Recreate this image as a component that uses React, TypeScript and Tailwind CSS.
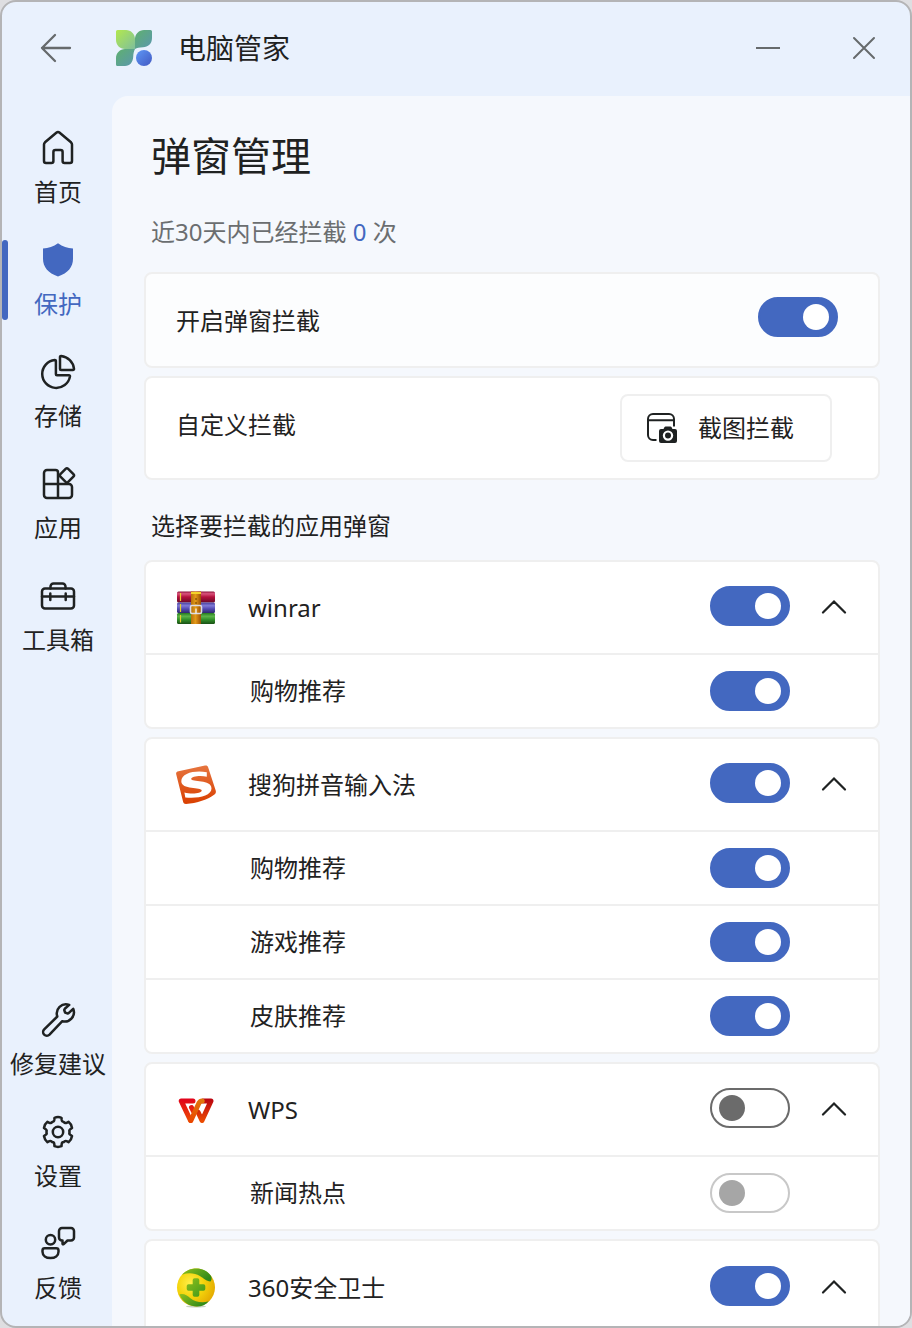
import { useState } from "react";
import type { ReactNode } from "react";
import clsx from "clsx";

/* ---------- line icons ---------- */

function LineIcon({ children }: { children: ReactNode }) {
  return (
    <svg
      viewBox="0 0 40 40"
      className="size-10"
      fill="none"
      stroke="currentColor"
      strokeWidth="2.5"
      strokeLinecap="round"
      strokeLinejoin="round"
      aria-hidden="true"
    >
      {children}
    </svg>
  );
}

const HomeIcon = () => (
  <LineIcon>
    <path d="M6 16.600c0-.9.4-1.700 1-2.300L18.300 4.700a2.600 2.600 0 0 1 3.400 0L33 14.300c.6.600 1 1.400 1 2.300V33a2 2 0 0 1-2 2h-5.400a2 2 0 0 1-2-2v-9a2 2 0 0 0-2-2h-5.200a2 2 0 0 0-2 2v9a2 2 0 0 1-2 2H8a2 2 0 0 1-2-2z" />
  </LineIcon>
);

const ShieldIcon = () => (
  <LineIcon>
    <path
      d="M20 3.200c4.600 3.300 9.500 4.900 15 5.300v10.300c0 8.200-5 14.200-15 17.800C10 33 5 27 5 18.800V8.500c5.500-.4 10.400-2 15-5.300z"
      fill="currentColor"
      stroke="none"
    />
  </LineIcon>
);

const StorageIcon = () => (
  <LineIcon>
    <path d="M17.900 9a1 1 0 0 0-1.100-1A14 14 0 1 0 32 24.400a1 1 0 0 0-1-1.100H18.900a1 1 0 0 1-1-1z" />
    <path d="M22 5a1 1 0 0 1 1.100-1A14.500 14.500 0 0 1 36 16.900a1 1 0 0 1-1 1.100H23a1 1 0 0 1-1-1z" />
  </LineIcon>
);

const AppsIcon = () => (
  <LineIcon>
    <path d="M9 6h8.500a2.500 2.500 0 0 1 2.500 2.500V20h11a3 3 0 0 1 3 3v8a3 3 0 0 1-3 3H9a3 3 0 0 1-3-3V9a3 3 0 0 1 3-3zM6 20h14M20 20v14" />
    <rect x="23.400" y="5.900" width="11" height="11" rx="1.800" transform="rotate(45 28.900 11.400)" />
  </LineIcon>
);

const ToolboxIcon = () => (
  <LineIcon>
    <rect x="4" y="12.600" width="32" height="20" rx="3" />
    <path d="M12.500 12.600v-2.100a3 3 0 0 1 3-3h9a3 3 0 0 1 3 3v2.100M4 20.500h32M12.300 17.500v6.500M27.700 17.500v6.500" />
  </LineIcon>
);

const WrenchIcon = () => (
  <LineIcon>
    <path d="M31.200 4.900A9.200 9.200 0 0 0 19.300 16.500L6.200 29.300a3.700 3.700 0 0 0 5.300 5.300L24.300 21.200A9.200 9.200 0 0 0 35.200 8.800l-4.300 4.100c-.5.500-1.100.600-1.700.400l-2.100-.7-.7-2.100c-.2-.6-.1-1.200.4-1.700z" />
  </LineIcon>
);

function gearOutline() {
  const at = (deg: number, r: number) => {
    const a = (deg * Math.PI) / 180;
    return `${(20 + r * Math.cos(a)).toFixed(2)} ${(20 + r * Math.sin(a)).toFixed(2)}`;
  };
  let d = "";
  for (let i = 0; i < 6; i++) {
    const c = -90 + i * 60;
    d += `${i ? "L" : "M"}${at(c - 14, 14.6)}Q${at(c, 15.6)} ${at(c + 14, 14.6)}`;
    d += `L${at(c + 17, 12.6)}Q${at(c + 21, 10.9)} ${at(c + 30, 11.6)}Q${at(c + 39, 10.9)} ${at(c + 43, 12.6)}`;
  }
  return d + "Z";
}

const GearIcon = () => (
  <LineIcon>
    <path d={gearOutline()} />
    <circle cx="20" cy="20" r="5.200" />
  </LineIcon>
);

const FeedbackIcon = () => (
  <LineIcon>
    <circle cx="12.500" cy="15.800" r="4.700" />
    <path d="M6.700 24.300h11.600a2.200 2.200 0 0 1 2.200 2.200v1.300c0 4-3.500 6.200-8 6.200s-8-2.200-8-6.200v-1.300a2.200 2.200 0 0 1 2.200-2.200z" />
    <path d="M24 4h9a3 3 0 0 1 3 3v6.500a3 3 0 0 1-3 3h-3.500l-3.800 3.600c-.6.500-1.200.2-1.200-.6v-3H24a3 3 0 0 1-3-3V7a3 3 0 0 1 3-3z" />
  </LineIcon>
);

const BackIcon = () => (
  <svg viewBox="0 0 32 32" className="size-8" fill="none" stroke="currentColor" strokeWidth="2.300" strokeLinecap="round" strokeLinejoin="round" aria-hidden="true">
    <path d="M30 16H2M15 3 2 16l13 13" />
  </svg>
);

const ScreenshotIcon = () => (
  <svg viewBox="0 0 32 32" className="size-8" aria-hidden="true">
    <path d="M10.500 28H7a5 5 0 0 1-5-5V7a5 5 0 0 1 5-5h16a5 5 0 0 1 5 5v7.500M2 8.200h26" fill="none" stroke="currentColor" strokeWidth="2" />
    <path
      fill="currentColor"
      fillRule="evenodd"
      d="m17.500 17 .9-1.700c.2-.5.700-.8 1.200-.8h4.800c.5 0 1 .3 1.200.8l.9 1.700h2.500a2 2 0 0 1 2 2v10a2 2 0 0 1-2 2H15a2 2 0 0 1-2-2V19a2 2 0 0 1 2-2zM22 18.400a5.200 5.200 0 1 0 0 10.400 5.200 5.200 0 0 0 0-10.400zm0 2.200a3 3 0 1 1 0 6 3 3 0 0 1 0-6z"
    />
  </svg>
);

/* ---------- brand marks ---------- */

const ManagerLogo = () => (
  <svg viewBox="0 0 36 36" className="size-9" aria-hidden="true">
    <defs>
      <linearGradient id="leafA" x1="0" y1="0" x2="1" y2="1">
        <stop offset="0" stopColor="#b2e84e" />
        <stop offset="1" stopColor="#7fbf9c" />
      </linearGradient>
      <linearGradient id="leafB" x1="0" y1="0" x2="1" y2="1">
        <stop offset="0" stopColor="#5fb06f" />
        <stop offset="1" stopColor="#5a97ae" />
      </linearGradient>
      <linearGradient id="dot" x1="0" y1="0" x2="1" y2="1">
        <stop offset="0" stopColor="#5e97f5" />
        <stop offset="1" stopColor="#4259c3" />
      </linearGradient>
    </defs>
    <path d="M28 0h6.500A1.500 1.500 0 0 1 36 1.500V8c0 6-4 9-9 9.300-4 .2-6 .7-8 1.700V9c0-5 4-9 9-9z" fill="url(#leafB)" />
    <path d="M9 19h10c-1 2-1.600 4-1.800 8-.3 5-3.200 9-8.200 9H1.500A1.500 1.500 0 0 1 0 34.500V28c0-5 4-9 9-9z" fill="url(#leafB)" />
    <path d="M1.500 0H10c5 0 9 4 9 9v10H9c-5 0-9-4-9-9V1.500A1.500 1.500 0 0 1 1.500 0z" fill="url(#leafA)" />
    <circle cx="28" cy="28" r="8" fill="url(#dot)" />
  </svg>
);

const WinrarLogo = () => (
  <svg viewBox="0 0 40 40" className="size-10" aria-hidden="true">
    <defs>
      <linearGradient id="bookR" x1="0" y1="0" x2="0" y2="1">
        <stop offset="0" stopColor="#8d1238" />
        <stop offset=".2" stopColor="#d8537c" />
        <stop offset=".5" stopColor="#b3113e" />
        <stop offset="1" stopColor="#6b0a28" />
      </linearGradient>
      <linearGradient id="bookP" x1="0" y1="0" x2="0" y2="1">
        <stop offset="0" stopColor="#463f9c" />
        <stop offset=".3" stopColor="#7f7ad6" />
        <stop offset=".6" stopColor="#544bb4" />
        <stop offset="1" stopColor="#2e286c" />
      </linearGradient>
      <linearGradient id="bookG" x1="0" y1="0" x2="0" y2="1">
        <stop offset="0" stopColor="#257a1e" />
        <stop offset=".3" stopColor="#5cb44a" />
        <stop offset=".6" stopColor="#31902a" />
        <stop offset="1" stopColor="#1a5015" />
      </linearGradient>
      <linearGradient id="strap" x1="0" y1="0" x2="1" y2="0">
        <stop offset="0" stopColor="#b5700c" />
        <stop offset=".45" stopColor="#e39a18" />
        <stop offset="1" stopColor="#9a4e06" />
      </linearGradient>
    </defs>
    <rect x="1" y="3.500" width="38" height="11" rx="1.500" fill="url(#bookR)" />
    <rect x="1" y="14.500" width="38" height="10.500" rx="1.500" fill="url(#bookP)" />
    <rect x="1" y="25" width="38" height="11" rx="1.500" fill="url(#bookG)" />
    <path d="M4.500 5v8M4.500 16v8M4.500 27v7.500" stroke="#e8cf2c" strokeWidth="1.200" />
    <rect x="15" y="3.500" width="10" height="32.500" fill="url(#strap)" />
    <path d="M15 4h10v2H15z" fill="#f4d42a" />
    <circle cx="20" cy="11" r=".8" fill="#5a2c02" />
    <circle cx="20" cy="15" r=".8" fill="#5a2c02" />
    <rect x="14.500" y="17.500" width="11" height="8" rx="1.500" fill="none" stroke="#dcdce4" strokeWidth="1.600" />
    <path d="M20 20.500v5" stroke="#f1f1f1" strokeWidth="1.400" />
  </svg>
);

const SogouLogo = () => (
  <svg viewBox="0 0 40 40" className="size-10" aria-hidden="true">
    <defs>
      <linearGradient id="sogou" x1="0" y1="0" x2="0" y2="1">
        <stop offset="0" stopColor="#e6753f" />
        <stop offset="1" stopColor="#d93f00" />
      </linearGradient>
    </defs>
    <path d="M2.500 6.200 29 .6c1.600-.3 2.700.3 3.200 1.800l7.500 23.200c.5 1.600.1 2.900-1.300 4C32.500 34.300 20.500 38.600 10 39c-1.600 0-2.500-.7-2.900-2.200L.2 9.300c-.4-1.700.5-2.800 2.300-3.100z" fill="url(#sogou)" />
    <path
      d="M30.800 7.200v4.600c-6-1.600-15.600-.6-15.600 2.300 0 3.400 20.300 0 20.300 9.400 0 7.600-14.500 10.300-26.200 8.900l-.9-5c6.400 1.700 17.300 1.300 17.300-2 0-3.600-20.400-.3-20.400-9.200 0-8.300 13.800-11.100 25.500-9z"
      fill="#fff"
    />
  </svg>
);

const WpsLogo = () => (
  <svg viewBox="0 0 40 40" className="size-10" fill="none" strokeWidth="5" strokeLinejoin="round" strokeLinecap="round" aria-hidden="true">
    <defs>
      <linearGradient id="wpsL" gradientUnits="userSpaceOnUse" x1="0" y1="8" x2="0" y2="33">
        <stop offset="0" stopColor="#e0001c" />
        <stop offset="1" stopColor="#ee5000" />
      </linearGradient>
      <linearGradient id="wpsM" gradientUnits="userSpaceOnUse" x1="26" y1="8" x2="15" y2="32">
        <stop offset="0" stopColor="#e07a0c" />
        <stop offset="1" stopColor="#ea4600" />
      </linearGradient>
      <linearGradient id="wpsR" gradientUnits="userSpaceOnUse" x1="0" y1="8" x2="0" y2="33">
        <stop offset="0" stopColor="#b80010" />
        <stop offset="1" stopColor="#ee5000" />
      </linearGradient>
    </defs>
    <path d="M27 10.900h8L26 30.500l-4-8.500" stroke="url(#wpsR)" />
    <path d="M17 10.900H5.200l9.300 19.600M15.500 17.500l2 4" stroke="url(#wpsL)" />
    <path d="M14.900 30.500 23 13c.8-1.500 1.700-2.100 3.200-2.100" stroke="url(#wpsM)" />
  </svg>
);

const Safe360Logo = () => (
  <svg viewBox="0 0 40 40" className="size-10" aria-hidden="true">
    <defs>
      <radialGradient id="ball" cx=".35" cy=".4" r=".7">
        <stop offset="0" stopColor="#fff04a" />
        <stop offset=".5" stopColor="#f4d40c" />
        <stop offset="1" stopColor="#e3a800" />
      </radialGradient>
      <linearGradient id="leaf360" x1="0" y1="0" x2="1" y2=".6">
        <stop offset="0" stopColor="#8fc01d" />
        <stop offset="1" stopColor="#2f8a1a" />
      </linearGradient>
      <linearGradient id="cross360" gradientUnits="userSpaceOnUse" x1="11" y1="10" x2="29" y2="29">
        <stop offset="0" stopColor="#8cbf1c" />
        <stop offset="1" stopColor="#3f971a" />
      </linearGradient>
    </defs>
    <ellipse cx="20" cy="38.500" rx="10" ry="1" fill="#c9d2c2" />
    <circle cx="20" cy="19.500" r="19" fill="url(#ball)" />
    <path d="M6 6.800C14-2.500 29-1 34.700 7.600c1.400 2.200 1.200 4.200-.2 5.800-4.500-.4-6.500-3.100-10.600-5.500C18.700 5 12 4.500 6 6.800z" fill="url(#leaf360)" />
    <path d="M3.400 26.500c4.200-1.400 7.500.8 11 3.700 4.600 3.600 11.600 5.100 18.300 3.100C26.700 41.300 9.700 41 3.400 26.500z" fill="url(#leaf360)" />
    <path d="M18.500 12h3v6h6v3h-6v6h-3v-6h-6v-3h6z" fill="url(#cross360)" stroke="url(#cross360)" strokeWidth="3.600" strokeLinejoin="round" />
  </svg>
);

/* ---------- controls ---------- */

type SwitchProps = {
  label: string;
  checked: boolean;
  disabled?: boolean;
  onChange: (value: boolean) => void;
};

function Switch({ label, checked, disabled, onChange }: SwitchProps) {
  return (
    <input
      type="checkbox"
      role="switch"
      aria-label={label}
      checked={checked}
      disabled={disabled}
      onChange={(e) => onChange(e.target.checked)}
      className="flex h-10 w-20 shrink-0 cursor-pointer appearance-none items-center rounded-full border-2 border-[#6b6b6b] bg-white px-[7px] before:size-[26px] before:rounded-full before:bg-[#6b6b6b] before:content-[''] checked:justify-end checked:border-[#4368c0] checked:bg-[#4368c0] checked:before:bg-white disabled:border-[#c8c8c8] disabled:before:bg-[#a6a6a6]"
    />
  );
}

type NavItem = { id: string; label: string; icon: ReactNode };

const mainNav: NavItem[] = [
  { id: "home", label: "首页", icon: <HomeIcon /> },
  { id: "protect", label: "保护", icon: <ShieldIcon /> },
  { id: "storage", label: "存储", icon: <StorageIcon /> },
  { id: "apps", label: "应用", icon: <AppsIcon /> },
  { id: "tools", label: "工具箱", icon: <ToolboxIcon /> },
];

const footNav: NavItem[] = [
  { id: "repair", label: "修复建议", icon: <WrenchIcon /> },
  { id: "settings", label: "设置", icon: <GearIcon /> },
  { id: "feedback", label: "反馈", icon: <FeedbackIcon /> },
];

function NavButton({ item, active, onSelect }: { item: NavItem; active: boolean; onSelect: () => void }) {
  return (
    <button
      type="button"
      onClick={onSelect}
      aria-current={active ? "page" : undefined}
      className={clsx(
        "relative flex h-28 w-full shrink-0 flex-col items-center gap-2 pt-4 pl-0.5 text-2xl leading-8 whitespace-nowrap",
        active
          ? "text-[#4368c0] before:absolute before:top-4 before:left-0 before:h-20 before:w-1.5 before:rounded-full before:bg-[#4368c0]"
          : "text-[#1f2222]",
      )}
    >
      {item.icon}
      <span>{item.label}</span>
    </button>
  );
}

type Rule = { name: string; on: boolean };
type AppGroup = { name: string; logo: ReactNode; on: boolean; open: boolean; rules: Rule[] };

const initialGroups: AppGroup[] = [
  { name: "winrar", logo: <WinrarLogo />, on: true, open: true, rules: [{ name: "购物推荐", on: true }] },
  {
    name: "搜狗拼音输入法",
    logo: <SogouLogo />,
    on: true,
    open: true,
    rules: [
      { name: "购物推荐", on: true },
      { name: "游戏推荐", on: true },
      { name: "皮肤推荐", on: true },
    ],
  },
  { name: "WPS", logo: <WpsLogo />, on: false, open: true, rules: [{ name: "新闻热点", on: false }] },
  { name: "360安全卫士", logo: <Safe360Logo />, on: true, open: true, rules: [] },
];

function GroupCard({ group, onChange }: { group: AppGroup; onChange: (g: AppGroup) => void }) {
  return (
    <li className="divide-y-2 divide-[#efefef] rounded-lg border-2 border-[#efefef] bg-white">
      <div className="flex h-[93px] items-center pr-7 pl-[30px]">
        {group.logo}
        <span className="ml-8 flex-1">{group.name}</span>
        <div className="flex items-center gap-7 pb-1">
          <Switch label={group.name} checked={group.on} onChange={(on) => onChange({ ...group, on })} />
          <button
            type="button"
            aria-label={group.name}
            aria-expanded={group.open}
            onClick={() => onChange({ ...group, open: !group.open })}
            className="flex size-8 items-center justify-center"
          >
            <svg
              viewBox="0 0 28 28"
              className={clsx("size-7", !group.open && "rotate-180")}
              fill="none"
              stroke="#1f2222"
              strokeWidth="2.2"
              strokeLinecap="round"
              aria-hidden="true"
            >
              <path d="M3 20.500 14 9.500l11 11" />
            </svg>
          </button>
        </div>
      </div>
      {group.open &&
        group.rules.map((rule, i) => (
          <div key={rule.name} className="flex h-[74px] items-center pr-[88px] pl-[104px] last:h-[72px]">
            <span className="flex-1">{rule.name}</span>
            <Switch
              label={rule.name}
              checked={rule.on}
              disabled={!group.on}
              onChange={(on) =>
                onChange({ ...group, rules: group.rules.map((r, j) => (j === i ? { ...r, on } : r)) })
              }
            />
          </div>
        ))}
    </li>
  );
}

export default function App() {
  const [page, setPage] = useState("protect");
  const [blocking, setBlocking] = useState(true);
  const [groups, setGroups] = useState(initialGroups);

  const renderNav = (item: NavItem) => (
    <NavButton key={item.id} item={item} active={page === item.id} onSelect={() => setPage(item.id)} />
  );

  return (
    <div className="h-screen bg-[#dedee1] font-['Noto_Sans','Noto_Sans_CJK_SC',sans-serif] text-[#1f2222]">
      <div className="flex h-full flex-col overflow-hidden rounded-2xl border-2 border-[#b4b4b6] bg-[#e9f1fd]">
        <header className="flex h-[94px] shrink-0 items-center pr-[30px] pb-0.5 pl-[38px] text-[#666a6c]">
          <button type="button" aria-label="返回">
            <BackIcon />
          </button>
          <span className="ml-11">
            <ManagerLogo />
          </span>
          <span className="ml-[26px] flex-1 text-[28px] leading-10 text-[#1f2222]">电脑管家</span>
          <button type="button" aria-label="最小化" className="flex size-8 items-center justify-center">
            <svg viewBox="0 0 24 24" className="size-6" stroke="currentColor" strokeWidth="2" aria-hidden="true">
              <path d="M0 12h24" />
            </svg>
          </button>
          <button type="button" aria-label="关闭" className="ml-16 flex size-8 items-center justify-center">
            <svg viewBox="0 0 24 24" className="size-6" stroke="currentColor" strokeWidth="2" strokeLinecap="round" aria-hidden="true">
              <path d="m2 2 20 20M22 2 2 22" />
            </svg>
          </button>
        </header>

        <div className="flex min-h-0 flex-1">
          <nav className="flex w-[110px] shrink-0 flex-col pt-4 pb-1.5">
            {mainNav.map(renderNav)}
            <div className="flex-1" />
            {footNav.map(renderNav)}
          </nav>

          <main className="min-w-0 flex-1 overflow-y-auto rounded-tl-2xl bg-[#f5f8fd] pr-[30px] pl-8 text-2xl leading-9 [scrollbar-width:none]">
            <h1 className="mt-[30px] pl-[7px] text-[40px] leading-[60px]">弹窗管理</h1>
            <p className="mt-7 pl-[7px] text-[#6b6e70]">
              近30天内已经拦截 <span className="text-[#4368c0]">0</span> 次
            </p>

            <section className="mt-[22px] flex items-start justify-between rounded-lg border-2 border-[#efefef] bg-[#fcfdfe] pt-[23px] pr-10 pb-[21px] pl-[30px]">
              <span className="leading-[48px]">开启弹窗拦截</span>
              <Switch label="开启弹窗拦截" checked={blocking} onChange={setBlocking} />
            </section>

            <section className="mt-2 flex items-start justify-between rounded-lg border-2 border-[#efefef] bg-white py-4 pr-[46px] pl-[30px]">
              <span className="leading-[62px]">自定义拦截</span>
              <button
                type="button"
                className="flex h-[68px] items-center gap-5 rounded-lg border-2 border-[#efefef] bg-white pr-9 pl-6"
              >
                <ScreenshotIcon />
                截图拦截
              </button>
            </section>

            <h2 className="mt-7 pl-[7px]">选择要拦截的应用弹窗</h2>

            <ul className="mt-4 flex flex-col gap-2">
              {groups.map((group, i) => (
                <GroupCard
                  key={group.name}
                  group={group}
                  onChange={(next) => setGroups(groups.map((g, j) => (j === i ? next : g)))}
                />
              ))}
            </ul>
          </main>
        </div>
      </div>
    </div>
  );
}
